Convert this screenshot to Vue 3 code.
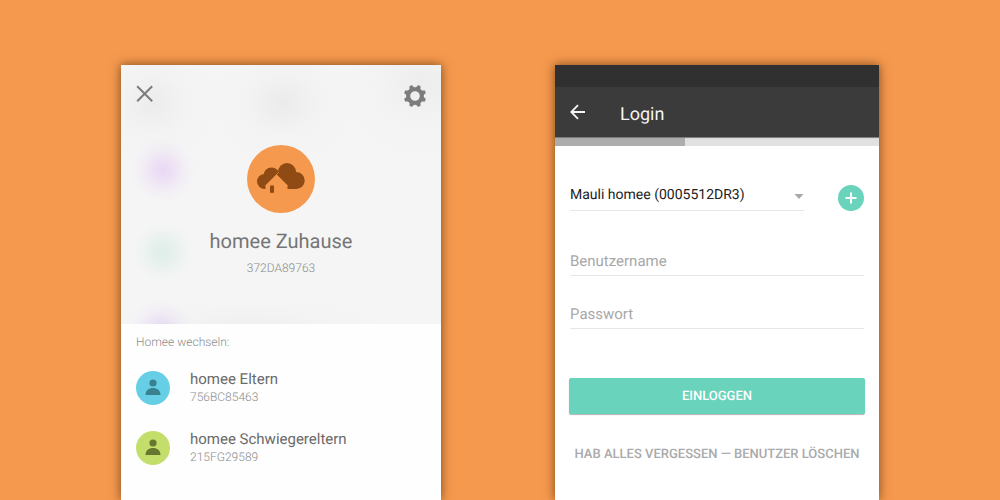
<script setup>
import { ref } from 'vue'

const homees = [
  { name: 'homee Eltern', id: '756BC85463', tone: 'blue' },
  { name: 'homee Schwiegereltern', id: '215FG29589', tone: 'green' },
]
const accounts = ['Mauli homee (0005512DR3)']
const account = ref(accounts[0])
const username = ref('')
const password = ref('')
const teeth = [0, 45, 90, 135, 180, 225, 270, 315]
</script>

<template>
  <main class="stage">
    <section class="screen switcher">
      <header class="hero">
        <div class="tools">
          <button type="button" class="icon-button" aria-label="Schließen">
            <svg width="18" height="18" viewBox="0 0 18 18" fill="none" stroke="#7c7c7c" stroke-width="2">
              <path d="M1.2 1.2 16.2 16.2M16.2 1.2 1.2 16.2" />
            </svg>
          </button>
          <button type="button" class="icon-button" aria-label="Einstellungen">
            <svg width="22" height="22" viewBox="-11 -11 22 22">
              <circle r="6.800" fill="none" stroke="#7c7c7c" stroke-width="4" />
              <path
                v-for="angle in teeth"
                :key="angle"
                :transform="`rotate(${angle + 22.5})`"
                d="M-3.2-7.5Q-2-8.5-1.8-10.2Q-1.7-11.2-0.8-11.200H0.8Q1.700-11.200 1.800-10.200Q2-8.500 3.200-7.500Z"
                fill="#7c7c7c"
              />
            </svg>
          </button>
        </div>
        <svg class="logo" width="68" height="68" viewBox="0 0 68 68">
          <circle cx="34" cy="34" r="34" fill="#f5994e" />
          <g fill="#8f4b13">
            <circle cx="17.5" cy="36.5" r="7.5" />
            <circle cx="24.5" cy="30.5" r="8" />
            <path d="M17 32 26 28 34 30V44H17Z" />
          </g>
          <g fill="#8f4b13">
            <circle cx="40" cy="27" r="9" />
            <circle cx="49.2" cy="35.500" r="8.500" />
            <path d="M33 32 48 28 50 44H33Z" />
          </g>
          <path d="M29.500 29.300 40.500 40.300V51H18.500V40.300Z" fill="#f5994e" />
          <path d="M29 30 32 27" stroke="#f5994e" stroke-width="0.600" />
          <rect x="23" y="40.500" width="4" height="7.300" fill="#8f4b13" />
        </svg>
        <h1>homee Zuhause</h1>
        <p class="hero-id">372DA89763</p>
      </header>
      <div class="others">
        <h2>Homee wechseln:</h2>
        <ul>
          <li v-for="homee in homees" :key="homee.id">
            <button type="button" class="homee">
              <svg class="avatar" :class="homee.tone" width="34" height="34" viewBox="0 0 34 34">
                <circle class="disc" cx="17" cy="17" r="17" />
                <g class="person">
                  <circle cx="17" cy="12" r="3.600" />
                  <path d="M9.500 24C9.500 19.500 12.800 17 17 17S24.500 19.500 24.500 24Z" />
                </g>
              </svg>
              <span class="homee-text">
                <span class="homee-name">{{ homee.name }}</span>
                <span class="homee-id">{{ homee.id }}</span>
              </span>
            </button>
          </li>
        </ul>
      </div>
    </section>

    <section class="screen login">
      <div class="status"></div>
      <header class="bar">
        <button type="button" class="icon-button" aria-label="Zurück">
          <svg width="16" height="16" viewBox="0 0 16 16" fill="none" stroke="#f4f4f4" stroke-width="1.800">
            <path d="M15 8H1.800M8 1.200 1.300 8 8 14.800" />
          </svg>
        </button>
        <h1>Login</h1>
      </header>
      <div class="progress"><div class="progress-done"></div></div>
      <form @submit.prevent>
        <div class="account-row">
          <div class="picker">
            <select v-model="account" aria-label="homee">
              <option v-for="item in accounts" :key="item">{{ item }}</option>
            </select>
            <svg class="caret" width="10" height="5" viewBox="0 0 10 5"><path d="M0.500 0H9.500L5 5Z" fill="#a8a8a8" /></svg>
          </div>
          <button type="button" class="add" aria-label="homee hinzufügen">
            <svg width="12" height="12" viewBox="0 0 12 12" stroke="#fff" stroke-width="2"><path d="M6 0.500V11.500M0.500 6H11.500" /></svg>
          </button>
        </div>
        <input v-model="username" class="user" type="text" placeholder="Benutzername" aria-label="Benutzername" />
        <input v-model="password" class="pass" type="password" placeholder="Passwort" aria-label="Passwort" />
        <button type="submit" class="submit">EINLOGGEN</button>
        <button type="button" class="forget">HAB ALLES VERGESSEN — BENUTZER LÖSCHEN</button>
      </form>
    </section>
  </main>
</template>

<style>
body {
  margin: 0;
  background: #f5994e;
}
</style>

<style scoped>
.stage {
  box-sizing: border-box;
  min-height: 100vh;
  display: grid;
  grid-template-columns: 320fr 324fr;
  column-gap: 114px;
  padding: 65px 121px 0;
  background: #f5994e;
  font-family: Roboto, "Liberation Sans", sans-serif;
  text-rendering: geometricPrecision;
  overflow: hidden;
}
h1, h2, p, ul {
  margin: 0;
  padding: 0;
  font-weight: 400;
}
ul {
  list-style: none;
}
button {
  padding: 0;
  border: 0;
  background: none;
  font-family: inherit;
  text-rendering: inherit;
  cursor: pointer;
}
svg {
  display: block;
}
.screen {
  min-width: 0;
  background: #fefefe;
  box-shadow: 0 0 10px rgba(70, 35, 5, 0.7);
}

.hero {
  box-sizing: border-box;
  padding: 20px 15px 48px;
  display: flex;
  flex-direction: column;
  align-items: center;
  background:
    radial-gradient(circle at 42px 105px, #ead9f5, rgba(234, 217, 245, 0.75) 9px, rgba(234, 217, 245, 0.25) 21px, rgba(234, 217, 245, 0) 32px),
    radial-gradient(circle at 42px 187px, #deeee9, rgba(222, 238, 233, 0.75) 9px, rgba(222, 238, 233, 0.25) 21px, rgba(222, 238, 233, 0) 30px),
    radial-gradient(circle at 40px 267px, #e6d8f4, rgba(230, 216, 244, 0.75) 9px, rgba(230, 216, 244, 0.25) 21px, rgba(230, 216, 244, 0) 32px),
    radial-gradient(ellipse 65px 60px at 32px 38px, #ececec, rgba(240, 240, 240, 0.5) 50%, rgba(245, 245, 245, 0)),
    radial-gradient(ellipse 70px 60px at 162px 38px, #ebebeb, rgba(240, 240, 240, 0.5) 50%, rgba(245, 245, 245, 0)),
    radial-gradient(ellipse 80px 70px at 300px 20px, #ededed, rgba(240, 240, 240, 0.5) 50%, rgba(245, 245, 245, 0)),
    radial-gradient(ellipse 130px 30px at 130px 265px, #ededed, rgba(240, 240, 240, 0.5) 50%, rgba(245, 245, 245, 0)),
    #f5f5f5;
}
.tools {
  width: 100%;
  display: flex;
  justify-content: space-between;
  align-items: flex-start;
}
.logo {
  margin-top: 38px;
}
.hero h1 {
  margin-top: 16px;
  font-size: 20px;
  line-height: 24px;
  color: #757575;
}
.hero-id {
  margin-top: 7px;
  font-size: 12px;
  line-height: 16px;
  font-weight: 300;
  color: #8c8c8c;
}
.others {
  padding: 10px 15px;
}
.others h2 {
  font-size: 12px;
  line-height: 16px;
  font-weight: 300;
  color: #8c8c8c;
}
.others ul {
  margin-top: 18px;
  display: grid;
  gap: 20px;
}
.homee {
  width: 100%;
  height: 40px;
  display: flex;
  align-items: center;
  gap: 20px;
  text-align: left;
}
.blue .disc { fill: #66cfe6; }
.blue .person { fill: #39818f; }
.green .disc { fill: #c4de6c; }
.green .person { fill: #67772f; }
.homee-text {
  display: flex;
  flex-direction: column;
}
.homee-name {
  font-size: 15px;
  line-height: 18px;
  color: #6a6a6a;
}
.homee-id {
  font-size: 12px;
  line-height: 18px;
  font-weight: 300;
  color: #8c8c8c;
}

.login {
  background: #fff;
}
.status {
  height: 22px;
  background: #303030;
}
.bar {
  height: 50px;
  padding: 0 15px;
  display: flex;
  align-items: center;
  gap: 34px;
  background: #3b3b3b;
}
.bar h1 {
  margin-top: 6px;
  font-size: 18px;
  line-height: 24px;
  color: #f4f4f4;
}
.progress {
  height: 9px;
  background: #e1e1e1;
  box-shadow: inset 0 2px 1px -1px #777;
}
.progress-done {
  width: 40%;
  height: 100%;
  background: #adadad;
  box-shadow: inset 0 2px 1px -1px #777;
}
form {
  padding: 32px 15px;
  display: flex;
  flex-direction: column;
}
.account-row {
  display: flex;
  align-items: center;
  gap: 34px;
}
.picker {
  position: relative;
  flex: 1;
}
select, input {
  box-sizing: border-box;
  width: 100%;
  margin: 0;
  padding: 2px 0 0;
  border: 0;
  border-bottom: 1px solid #e6e6e6;
  border-radius: 0;
  outline: 0;
  appearance: none;
  background: none;
  font-family: inherit;
  text-rendering: inherit;
  font-size: 15px;
  color: #333;
}
select {
  display: block;
  height: 33px;
  font-size: 14px;
  color: #222;
}
.caret {
  position: absolute;
  right: 0;
  top: 16px;
  pointer-events: none;
}
.add {
  width: 26px;
  height: 26px;
  margin-top: 6px;
  display: grid;
  place-items: center;
  border-radius: 50%;
  background: #69d3bb;
}
input {
  height: 32px;
}
input::placeholder {
  color: #a8a8a8;
  opacity: 1;
}
.user {
  margin-top: 33px;
}
.pass {
  margin-top: 21px;
}
.submit {
  height: 36px;
  margin: 49px -1px 0;
  border-radius: 2px;
  background: #69d3bb;
  box-shadow: 0 1px 1px rgba(0, 0, 0, 0.3);
  font-size: 13px;
  font-weight: 500;
  color: #fff;
}
.forget {
  margin-top: 33px;
  font-size: 13px;
  line-height: 16px;
  font-weight: 500;
  color: #aaa;
  white-space: nowrap;
}
</style>
